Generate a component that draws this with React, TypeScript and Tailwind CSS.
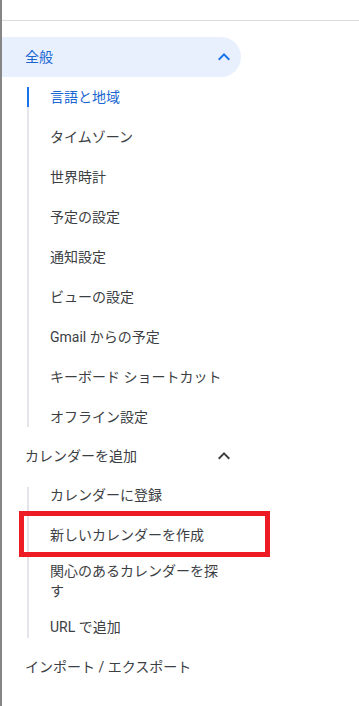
import React from "react";

type NavItem = { label: string; active?: boolean };

const generalItems: NavItem[] = [
	{ label: "言語と地域", active: true },
	{ label: "タイムゾーン" },
	{ label: "世界時計" },
	{ label: "予定の設定" },
	{ label: "通知設定" },
	{ label: "ビューの設定" },
	{ label: "Gmail からの予定" },
	{ label: "キーボード ショートカット" },
	{ label: "オフライン設定" },
];

const addItems: NavItem[] = [
	{ label: "カレンダーに登録" },
	{ label: "新しいカレンダーを作成" },
	{ label: "関心のあるカレンダーを探す" },
	{ label: "URL で追加" },
];

const Chevron = ({ className }: { className: string }) => (
	<svg viewBox="0 0 24 24" className={`h-6 w-6 ${className}`} fill="currentColor">
		<path d="M7.41 15.41L12 10.83l4.59 4.58L18 14l-6-6-6 6z" />
	</svg>
);

const SubList = ({ items, lineClass }: { items: NavItem[]; lineClass: string }) => (
	<div className="relative ml-[25px] w-[214px]">
		{/* guide line */}
		<div className={`absolute left-0 w-[2px] bg-[#e4e5ea] ${lineClass}`} />
		{items.map((item) => (
			<div key={item.label} className="relative flex min-h-[40px] items-center py-[6px]">
				<div
					className={
						item.active ? "h-[20px] w-[2px] bg-[#1a73e8]" : "h-[20px] w-[2px]"
					}
				/>
				<span
					className={`w-[197px] pl-[21px] leading-[20px] ${
						item.active ? "text-[#1967d2]" : ""
					}`}
				>
					{item.label}
				</span>
			</div>
		))}
	</div>
);

export default function App() {
	return (
		<div className="relative h-[706px] w-[359px] overflow-hidden border-l-2 border-[#858585] bg-white font-[Roboto,'Noto_Sans_CJK_JP',sans-serif] text-[14px] text-[#3c4043]">
			<div className="h-[21px] border-b border-[#dadce0]" />

			<div className="mt-[16px] flex h-[40px] w-[239px] items-center justify-between rounded-r-full bg-[#e8f0fe] pl-[23px] pr-[5px] text-[#1967d2]">
				<span className="leading-[20px]">全般</span>
				<Chevron className="text-[#1a73e8]" />
			</div>

			<SubList items={generalItems} lineClass="top-[10px] bottom-[10px]" />

			<div className="flex h-[38px] w-[239px] items-center justify-between pl-[23px] pr-[5px]">
				<span className="leading-[20px]">カレンダーを追加</span>
				<Chevron className="text-[#3c4043]" />
			</div>

			<SubList items={addItems} lineClass="top-[12px] bottom-[9px]" />

			<div className="flex h-[40px] items-center pl-[23px]">
				<span className="leading-[20px]">インポート / エクスポート</span>
			</div>

			{/* red annotation box */}
			<div className="absolute left-[17px] top-[511px] h-[46px] w-[251px] border-[5px] border-[#ed1c24]" />
		</div>
	);
}
